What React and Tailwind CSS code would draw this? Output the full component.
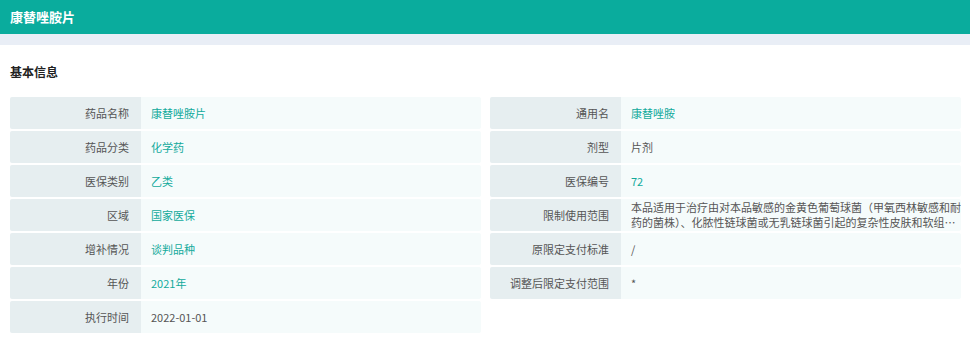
const rows = [
  { label: '药品名称', value: '康替唑胺片', teal: true },
  { label: '通用名', value: '康替唑胺', teal: true },
  { label: '药品分类', value: '化学药', teal: true },
  { label: '剂型', value: '片剂' },
  { label: '医保类别', value: '乙类', teal: true },
  { label: '医保编号', value: '72', teal: true },
  { label: '区域', value: '国家医保', teal: true },
  {
    label: '限制使用范围',
    value:
      '本品适用于治疗由对本品敏感的金黄色葡萄球菌（甲氧西林敏感和耐药的菌株）、化脓性链球菌或无乳链球菌引起的复杂性皮肤和软组织感染。',
    clamp: true,
  },
  { label: '增补情况', value: '谈判品种', teal: true },
  { label: '原限定支付标准', value: '/' },
  { label: '年份', value: '2021年', teal: true },
  { label: '调整后限定支付范围', value: '*' },
  { label: '执行时间', value: '2022-01-01' },
]

function InfoRow({ label, value, teal, clamp }) {
  return (
    <div className="flex min-h-[32px] rounded-[2px] overflow-hidden">
      <div className="w-[131px] shrink-0 bg-[#e6eef0] flex items-center justify-end pr-[12px] text-[#555]">
        {label}
      </div>
      <div className="flex-1 min-w-0 bg-[#f5fbfb] flex items-center pl-[10px] pr-0">
        {clamp ? (
          <span className="line-clamp-2 leading-[15px] text-[#555]">{value}</span>
        ) : (
          <span className={teal ? 'text-[#12aa9b]' : 'text-[#555]'}>{value}</span>
        )}
      </div>
    </div>
  )
}

export default function App() {
  return (
    <div
      className="w-[970px] h-[342px] bg-white overflow-hidden text-[11px]"
      style={{ fontFamily: '"Noto Sans CJK SC", "Noto Sans", sans-serif' }}
    >
      <div className="h-[34px] bg-[#0aac9d] flex items-center px-[10px]">
        <h1 className="text-white font-bold text-[13px]">康替唑胺片</h1>
      </div>
      <div className="h-[11px] bg-[#e9eef6]" />

      <div className="px-[10px] pt-[18px]">
        <h2 className="font-bold text-[12px] leading-[18px] text-[#222]">基本信息</h2>
        <div className="mt-[16px] grid grid-cols-2 gap-x-[9px] gap-y-[2px] w-[951px]">
          {rows.map(r => (
            <InfoRow key={r.label} {...r} />
          ))}
        </div>
      </div>
    </div>
  )
}
